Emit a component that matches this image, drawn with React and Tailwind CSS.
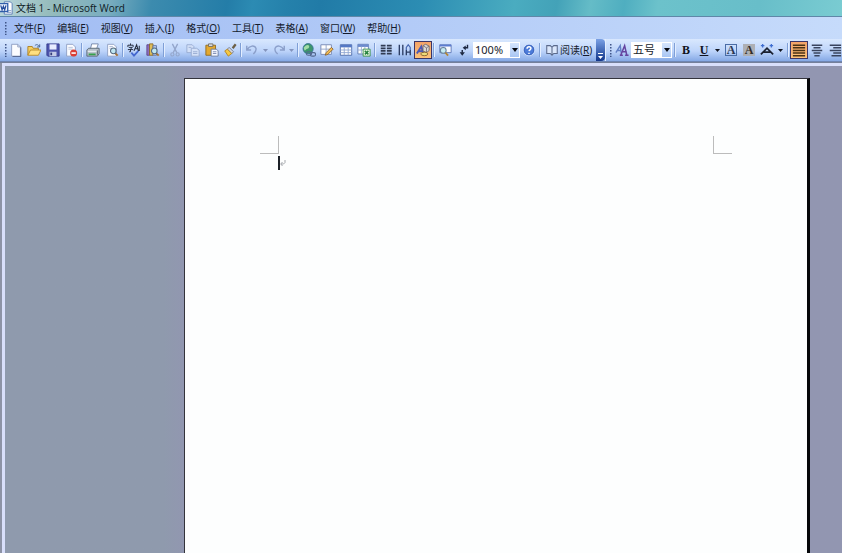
import React from "react";

const menus = [
  ["文件", "F"],
  ["编辑", "E"],
  ["视图", "V"],
  ["插入", "I"],
  ["格式", "O"],
  ["工具", "T"],
  ["表格", "A"],
  ["窗口", "W"],
  ["帮助", "H"],
];

function Svg({ children, className = "" }) {
  return (
    <svg viewBox="0 0 16 16" className={"h-[14px] w-[14px] shrink-0 " + className} fill="none" aria-hidden="true">
      {children}
    </svg>
  );
}

function Tool({ label, active = false, children }) {
  return (
    <button
      type="button"
      aria-label={label}
      title={label}
      className={
        "flex h-[18px] w-[18px] shrink-0 items-center justify-center " +
        (active ? "border border-[#3c3566] bg-linear-to-b from-[#f3a368] to-[#fcc27a]" : "")
      }
    >
      {children}
    </button>
  );
}

function Drop({ label, muted = false }) {
  return (
    <button type="button" aria-label={label} className="flex h-[18px] w-2 shrink-0 items-center justify-center">
      <svg viewBox="0 0 5 3" className={"h-[3px] w-[5px] " + (muted ? "fill-[#8495bd]" : "fill-[#10141f]")} aria-hidden="true">
        <path d="M0 0h5L2.500 3z" />
      </svg>
    </button>
  );
}

function Sep() {
  return (
    <div className="flex h-[14px] w-1 shrink-0 justify-center">
      <div className="w-px bg-[#7f9fd6]" />
      <div className="w-px bg-[#e3eeff]" />
    </div>
  );
}

function Grip() {
  return (
    <svg viewBox="0 0 2 14" className="h-[14px] w-[2px] shrink-0 fill-[#3f5488]" aria-hidden="true">
      <path d="M0 1h1.500v1.500H0zM0 4h1.500v1.500H0zM0 7h1.500v1.500H0zM0 10h1.500v1.500H0zM0 12.800h1.500V14H0z" />
    </svg>
  );
}

function Combo({ label, value, options, className }) {
  return (
    <div className={"relative h-4 shrink-0 bg-white " + className}>
      <select
        aria-label={label}
        defaultValue={value}
        className="block h-4 w-full appearance-none bg-transparent pl-[2px] text-[11px] leading-4 text-[#20242c] outline-none"
      >
        {options.map((o) => (
          <option key={o}>{o}</option>
        ))}
      </select>
      <div className="pointer-events-none absolute inset-y-0 right-0 flex w-[11px] items-center justify-center border border-white bg-linear-to-b from-[#d5e5fd] to-[#a9c6f3]">
        <svg viewBox="0 0 6 4" className="h-1 w-[6px] shrink-0 fill-[#06080f]" aria-hidden="true">
          <path d="M0 0h6L3 4z" />
        </svg>
      </div>
    </div>
  );
}

const Sheet = () => (
  <path d="M3 1.500h7l3 3V15H3z" fill="#fbfcff" stroke="#8c9cc0" strokeWidth="1" />
);

const Lens = () => (
  <>
    <path d="M11.500 11.500l3 3" stroke="#a87434" strokeWidth="2.200" />
    <circle cx="9.500" cy="9" r="3.200" fill="#bfe6f2" stroke="#54697e" strokeWidth="1.200" />
  </>
);

const alignLines = {
  justify: "M1 2.500H15M1 5.500H15M1 8.500H15M1 11.500H15M1 14.500H15",
  center: "M2 2.500H14M4 5.500H12M2 8.500H14M4 11.500H12M5 14.500H11",
  right: "M2 2.500H15M6 5.500H15M2 8.500H15M6 11.500H15M4 14.500H15",
};

function AlignIcon({ kind }) {
  return (
    <Svg>
      <path d={alignLines[kind]} stroke={kind === "justify" ? "#4a3113" : "#39445e"} strokeWidth="1.700" />
    </Svg>
  );
}

function TitleBar() {
  return (
    <header className="flex h-4 shrink-0 items-center overflow-hidden bg-linear-[100deg,#b9d6dc_0%,#96bcbc_6%,#79adbf_13%,#3c8bae_18%,#247da8_27%,#2c8bb3_30%,#2581ab_34%,#217ba7_38%,#2c8db3_50%,#4aacc0_61%,#43a2b8_66%,#65bcc7_70%,#4faec0_74%,#6cc2cb_78%,#68bec9_90%,#7accd2_100%]">
      <Svg className="-ml-px">
        <path d="M6 1h7l2 2v12H6z" fill="#fff" stroke="#5476b4" />
        <path d="M9 11h5M9 13h5" stroke="#7b98c8" />
        <path d="M0 3h10v9H0z" fill="#f3f7ff" stroke="#315eaa" strokeWidth="1.500" />
        <path d="M2 5l1.500 5L5 6l1.500 4L8 5" stroke="#244c9b" strokeWidth="1.400" />
      </Svg>
      <h1 className="pl-[3px] font-['Open_Sans','Noto_Sans_CJK_SC',sans-serif] text-[10px] leading-4 whitespace-nowrap text-[#0e1b24]">
        文档 1 - Microsoft Word
      </h1>
    </header>
  );
}

function MenuBar() {
  return (
    <nav aria-label="菜单" className="flex h-[23px] shrink-0 items-center border-t border-[#5f87a8] bg-linear-to-r from-[#a1bcf3] to-[#c6dbfb] pl-[5px]">
      <Grip />
      <div className="flex gap-3 pl-[7px]">
        {menus.map(([name, key]) => (
          <button type="button" key={name} className="text-[10px] leading-4 whitespace-nowrap text-[#141b2c]">
            {name}(<span className="underline">{key}</span>)
          </button>
        ))}
      </div>
    </nav>
  );
}

function StandardTools() {
  return (
    <>
      <div className="flex w-[73px] shrink-0 justify-between">
        <Tool label="新建">
          <Svg><Sheet /><path d="M10 1.500v3h3" stroke="#8c9cc0" /><path d="M13.500 5v10.500H4" stroke="#4b5c86" /></Svg>
        </Tool>
        <Tool label="打开">
          <Svg>
            <path d="M1 14V4h5l1 2h6v3" fill="#f5cf61" stroke="#a97c1c" />
            <path d="M1 14l3-6h12l-3 6z" fill="#ffdf80" stroke="#b78724" />
            <path d="M9 3c2-2 4-1 5 1M14.500 1.500V4.500h-3" stroke="#3c5d8c" />
          </Svg>
        </Tool>
        <Tool label="保存">
          <Svg>
            <path d="M1 1h14v14H2l-1-1z" fill="#4c54ad" stroke="#343b8b" />
            <path d="M4 1.500h8v6H4z" fill="#e8edff" />
            <path d="M4 10h8v5H4z" fill="#c3cbe6" /><path d="M5 11h2v3H5z" fill="#343b7b" />
          </Svg>
        </Tool>
        <Tool label="权限">
          <Svg>
            <Sheet /><path d="M5 5h5M5 7h5" stroke="#b3bfd8" />
            <circle cx="11" cy="11.500" r="4" fill="#da3d34" /><path d="M8.500 11.500h5" stroke="#fff" strokeWidth="1.800" />
          </Svg>
        </Tool>
      </div>
      <Sep />
      <div className="flex w-[37px] shrink-0 justify-between">
        <Tool label="打印">
          <Svg>
            <path d="M5 7l1.500-6H14l-2 6" fill="#fff" stroke="#7184a6" />
            <path d="M1 8l2-2h12v6l-2 3H1z" fill="#b6c0c9" stroke="#52616f" />
            <path d="M2 9.500h10" stroke="#f5f8fb" /><path d="M3 13h8" stroke="#37a14b" strokeWidth="2" />
            <path d="M13 8.500v5" stroke="#4e5d68" />
          </Svg>
        </Tool>
        <Tool label="打印预览"><Svg><Sheet /><path d="M5 4h4M5 6h3" stroke="#aab8d3" /><Lens /></Svg></Tool>
      </div>
      <Sep />
      <div className="flex w-[37px] shrink-0 justify-between">
        <Tool label="拼写和语法">
          <Svg>
            <path d="M1 2.500h6M4 .5v2M1 2.500v2M7 2.500v2M2 5h4L4 7v3H2.500M1 7.500h6" stroke="#232b3c" strokeWidth="1.100" />
            <path d="M8 9l3-7 2 7M9 6.500h4M14 3v6" stroke="#232b3c" strokeWidth="1.200" />
            <path d="M5 11l3 3.500L13 9" stroke="#4569cf" strokeWidth="2" />
          </Svg>
        </Tool>
        <Tool label="信息检索">
          <Svg>
            <path d="M1 2h3v12H1z" fill="#8c6dbb" stroke="#5d438c" />
            <path d="M4 1h4v13H4z" fill="#dfbd59" stroke="#8b6d28" />
            <path d="M8 3h4v11H8z" fill="#b9c9ec" stroke="#6076a7" /><Lens />
          </Svg>
        </Tool>
      </div>
      <Sep />
      <div className="flex w-[73px] shrink-0 justify-between">
        <Tool label="剪切">
          <Svg>
            <path d="M5 1l5 10M11 1L6 11" stroke="#94a6cb" strokeWidth="1.500" />
            <circle cx="5" cy="13" r="1.800" stroke="#94a6cb" strokeWidth="1.300" /><circle cx="11" cy="13" r="1.800" stroke="#94a6cb" strokeWidth="1.300" />
          </Svg>
        </Tool>
        <Tool label="复制">
          <Svg>
            <path d="M1 2h6l2 2v7H1z" fill="#d4e1f8" stroke="#96a9d0" /><path d="M6 6h6l3 2v7H6z" fill="#d4e1f8" stroke="#96a9d0" />
            <path d="M8 10h5M8 12h5M3 5h3" stroke="#96a9d0" />
          </Svg>
        </Tool>
        <Tool label="粘贴">
          <Svg>
            <path d="M1 2.500h11V14H1z" fill="#e4a92f" stroke="#8e681d" /><path d="M4 1h5v3H4z" fill="#d6d9df" stroke="#706b5e" />
            <path d="M7 7h6l2 2v6H7z" fill="#f4f7ff" stroke="#63779e" /><path d="M9 10h4M9 12h4" stroke="#7687af" />
          </Svg>
        </Tool>
        <Tool label="格式刷">
          <Svg>
            <path d="M11 6l3.500-4.500" stroke="#6d5f45" strokeWidth="2.600" />
            <path d="M7 5l5 5-2 2-5-5z" fill="#d5d9e2" stroke="#6d758c" />
            <path d="M5 7l5 5-4 3L2 9z" fill="#f5c843" stroke="#b28422" />
          </Svg>
        </Tool>
      </div>
      <Sep />
      <div className="flex w-[53px] shrink-0 justify-between">
        <Tool label="撤消"><Svg><path d="M2 3v5h5M2.500 7.500C5 3 11 2 12.500 6c.6 3-1 5-3 6.500" stroke="#8b9fca" strokeWidth="1.600" /></Svg></Tool>
        <Drop label="撤消列表" muted />
        <Tool label="恢复"><Svg><path d="M14 3v5H9M13.500 7.500C11 3 5 2 3.500 6c-.6 3 1 5 3 6.500" stroke="#8b9fca" strokeWidth="1.600" /></Svg></Tool>
        <Drop label="恢复列表" muted />
      </div>
      <Sep />
      <div className="flex w-[73px] shrink-0 justify-between">
        <Tool label="插入超链接">
          <Svg>
            <circle cx="7" cy="6.500" r="5.800" fill="#3c966c" stroke="#367194" />
            <path d="M4 3c3-2 5 0 4 2s-3 1-4 3-2-2-2-3z" fill="#a2dda8" />
            <rect x="5" y="10" width="6" height="4" rx="2" stroke="#53688f" strokeWidth="1.300" /><rect x="9.500" y="11" width="6" height="4" rx="2" stroke="#53688f" strokeWidth="1.300" />
          </Svg>
        </Tool>
        <Tool label="表格和边框">
          <Svg>
            <path d="M1 2h12v11H1z" fill="#fff" stroke="#7183b1" /><path d="M1 7h12M7 2v11" stroke="#8fa0c6" />
            <path d="M6 14l1-3 6-6 2 2-6 6z" fill="#efb950" stroke="#8b6330" />
          </Svg>
        </Tool>
        <Tool label="插入表格">
          <Svg>
            <path d="M1.500 2h13v12h-13z" fill="#fff" stroke="#4867a8" /><path d="M1.500 2h13v3h-13z" fill="#5478c5" />
            <path d="M1.500 8h13M1.500 11h13M6 5v9M10.500 5v9" stroke="#8fa6d1" />
          </Svg>
        </Tool>
        <Tool label="插入 Excel 工作表">
          <Svg>
            <path d="M1 1.500h12v11H1z" fill="#fff" stroke="#5b78af" /><path d="M1 1.500h12v3H1z" fill="#6c8bce" />
            <path d="M1 8h6M5 4v8M9 4v3" stroke="#93a9cf" /><path d="M7 7h8v8H7z" fill="#e5f5df" stroke="#38914a" />
            <path d="M9 9l4 4M13 9l-4 4" stroke="#278340" strokeWidth="1.700" />
          </Svg>
        </Tool>
      </div>
      <Sep />
      <div className="flex w-[55px] shrink-0 justify-between">
        <Tool label="分栏"><Svg><path d="M2 3h5.500M2 6h5.500M2 9h5.500M2 12h5.500M9 3h5.500M9 6h5.500M9 9h5.500M9 12h5.500" stroke="#303b52" strokeWidth="2" /></Svg></Tool>
        <Tool label="更改文字方向"><Svg><path d="M1.500 2v12M5.500 2v12M9.500 8v6M14 8v6M9.500 10.500H14" stroke="#293a61" strokeWidth="1.500" /><path d="M9.500 8v-3L11.700 2 14 5v3" stroke="#4969b1" strokeWidth="1.400" /></Svg></Tool>
        <Tool label="绘图" active>
          <Svg>
            <path d="M1 12L6 4l2.500 8M3 9.500h5" stroke="#4c59b5" strokeWidth="2.200" />
            <path d="M8 3l3-1.500L15 3.500v5L12 11 8 9z" fill="#dcd9d3" stroke="#6d6670" /><path d="M8 3l4 2.500V11M12 5.500l3-2" stroke="#79707a" />
            <ellipse cx="9.500" cy="12.500" rx="4" ry="2" fill="#eedb7a" stroke="#87622e" />
          </Svg>
        </Tool>
      </div>
      <Sep />
      <div className="flex w-[37px] shrink-0 justify-between">
        <Tool label="文档结构图">
          <Svg>
            <path d="M2 2h13v9H2z" fill="#f9fbff" stroke="#5873b6" /><path d="M2 2h13v2H2z" fill="#5c7dd0" />
            <circle cx="6" cy="8.500" r="3.300" fill="#c4ebf1" stroke="#67809a" strokeWidth="1.200" /><path d="M8.500 11l3 3.500" stroke="#b28635" strokeWidth="2" />
          </Svg>
        </Tool>
        <Tool label="显示/隐藏编辑标记">
          <Svg>
            <path d="M12 2v3.500H9" stroke="#1d2942" strokeWidth="1.600" /><path d="M10 2.800v5.400L6.500 5.500z" fill="#1d2942" />
            <path d="M6 8v3" stroke="#1d2942" strokeWidth="1.600" /><path d="M3 10.500h6L6 14.500z" fill="#1d2942" />
          </Svg>
        </Tool>
      </div>
      <Combo label="显示比例" value="100%" options={["100%", "75%", "50%"]} className="w-[47px]" />
      <Tool label="帮助">
        <Svg>
          <circle cx="8" cy="8" r="6.500" fill="#4c7bd9" stroke="#d8e6fc" /><circle cx="8" cy="8" r="5.500" stroke="#3a62b9" />
          <path d="M5.800 6.500c0-3 4.700-2.800 4.400-.2-.2 1.500-2 1.500-2.200 3M8 11v1.500" stroke="#fff" strokeWidth="1.700" />
        </Svg>
      </Tool>
      <Sep />
      <button type="button" className="flex h-[18px] w-[54px] shrink-0 items-center gap-px pl-[3px] text-[10px] leading-4 whitespace-nowrap text-[#141b2c]">
        <Svg><path d="M2 3h4l2 2 2-2h4v9h-4l-2 2-2-2H2zM8 5v9" fill="#dbe7fb" stroke="#5b6a8b" strokeWidth="1.200" /></Svg>
        <span>阅读(<span className="underline">R</span>)</span>
      </button>
      <button type="button" aria-label="工具栏选项" className="flex w-[9px] shrink-0 items-end justify-center self-stretch rounded-r-sm bg-linear-to-b from-[#7ba1e5] to-[#12358a] pb-[2px]">
        <svg viewBox="0 0 7 6" className="h-[6px] w-[7px] fill-white" aria-hidden="true"><path d="M1 0h5v1H1zM1 3h5L3.500 6z" /></svg>
      </button>
    </>
  );
}

function FormatTools() {
  return (
    <div className="flex shrink-0 items-center self-stretch border-l border-[#e4eefd] pl-1">
      <Grip />
      <div className="w-px shrink-0" />
      <Tool label="格式窗格">
        <Svg><path d="M1 11l5-8 1 8M3 8.500h4" stroke="#6280c6" strokeWidth="1.600" /><path d="M6.500 14L11 3l2.500 11M8.500 10h5M5.500 14h3.500M11.500 14h4" stroke="#65449f" strokeWidth="1.700" /></Svg>
      </Tool>
      <Combo label="字号" value="五号" options={["五号", "四号", "小四"]} className="w-[41px]" />
      <div className="w-px shrink-0" />
      <Sep />
      <Tool label="加粗"><span className="font-['Liberation_Serif',serif] text-[12px] leading-4 font-black text-[#10141f]">B</span></Tool>
      <Tool label="下划线"><span className="font-['Liberation_Serif',serif] text-[12px] leading-4 font-bold text-[#10141f] underline">U</span></Tool>
      <Drop label="下划线样式" />
      <div className="w-px shrink-0" />
      <Tool label="字符边框"><span className="flex h-3 w-3 items-center justify-center border border-[#4a6ca5] font-['Liberation_Serif',serif] text-[12px] leading-3 font-bold text-[#2b3650]">A</span></Tool>
      <Tool label="字符底纹"><span className="flex h-3 w-3 items-center justify-center bg-[#aeb0b5] font-['Liberation_Serif',serif] text-[12px] leading-3 font-bold text-[#332c28]">A</span></Tool>
      <Tool label="字符缩放">
        <Svg><path d="M1 13l7-7 7 7M4 10.500h8" stroke="#1a2131" strokeWidth="2" /><path d="M1 3h4M3 1v4M11 3h4M13 1v4" stroke="#3f6ed1" strokeWidth="1.500" /></Svg>
      </Tool>
      <Drop label="缩放比例" />
      <div className="w-[2px] shrink-0" />
      <Sep />
      <Tool label="两端对齐" active><AlignIcon kind="justify" /></Tool>
      <Tool label="居中"><AlignIcon kind="center" /></Tool>
      <Tool label="右对齐"><AlignIcon kind="right" /></Tool>
    </div>
  );
}

function DocumentArea() {
  return (
    <main className="flex grow border-t border-[#75809a] bg-[#8d93a6] pl-[2px]">
      <div className="flex grow border-t-3 border-l-3 border-[#d9dffb] bg-linear-to-r from-[#8f9aad] from-19% to-[#9296b1] to-22% pt-3 pr-[32px] pl-[179px]">
        <article className="grow border-t border-r-3 border-l border-t-[#34343c] border-r-[#06070a] border-l-[#34343c] bg-[#fdfefe] px-[75px] pt-[57px]">
          <div className="flex justify-between">
            <div className="h-[18px] w-[19px] border-r border-b border-[#bcbcbc]" />
            <div className="h-[18px] w-[19px] border-b border-l border-[#bcbcbc]" />
          </div>
          <div role="textbox" aria-label="正文" className="flex items-center pt-[2px] pl-[18px]">
            <div className="h-[14px] w-[2px] bg-[#1c2027]" />
            <svg viewBox="0 0 6 6" className="h-[6px] w-[6px]" fill="none" stroke="#a3a6ab" aria-hidden="true">
              <path d="M5 0v2.500L3.500 4H1M2.500 2L.7 4l1.800 2" />
            </svg>
          </div>
        </article>
      </div>
    </main>
  );
}

export default function App() {
  return (
    <div className="flex min-h-screen flex-col overflow-hidden bg-[#a3bef3] font-['Noto_Sans','Noto_Sans_CJK_SC',sans-serif]">
      <TitleBar />
      <MenuBar />
      <div role="toolbar" aria-label="常用" className="h-[23px] shrink-0 overflow-hidden border-b border-[#6f86b4] bg-[#a5c0f4]">
        <div className="flex h-full items-center bg-linear-to-b from-[#d9e8fe] via-[#bdd4fa] via-55% to-[#86a9e5] pl-[5px]">
          <Grip />
          <StandardTools />
          <FormatTools />
        </div>
      </div>
      <DocumentArea />
    </div>
  );
}
